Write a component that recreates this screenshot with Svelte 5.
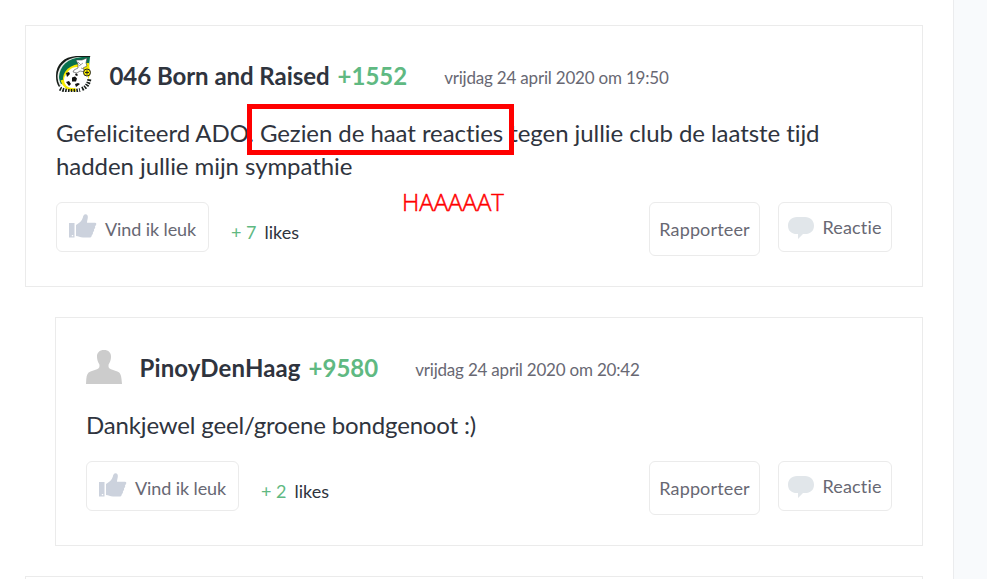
<script>
  const comments = [
    {
      name: '046 Born and Raised',
      score: '+1552',
      date: 'vrijdag 24 april 2020 om 19:50',
      club: true,
      reply: false,
      before: 'Gefeliciteerd ADO. ',
      marked: 'Gezien de haat reacties',
      after: ' tegen jullie club de laatste tijd hadden jullie mijn sympathie',
      note: 'HAAAAAT',
      likes: 7
    },
    {
      name: 'PinoyDenHaag',
      score: '+9580',
      date: 'vrijdag 24 april 2020 om 20:42',
      club: false,
      reply: true,
      before: 'Dankjewel geel/groene bondgenoot :)',
      likes: 2
    }
  ]
</script>

<div class="page">
  <main>
    {#each comments as comment}
      <article class="card" class:reply={comment.reply}>
        <header>
          {#if comment.club}
            <svg class="avatar" viewBox="0 0 36 36">
              <path d="M34.500 0H20C8 1 0 8 0 20c0 5 1 8 3 11l6-6L30 7z" fill="#161c18" />
              <path d="M34 1H22C10 2 2 10 1.500 20c0 4 1 7 2.500 10L8 28l21-15z" fill="#e8ece8" />
              <path d="M34 1H26C12 2 3.500 10 3 21c0 2 1 5 2 7l6-2L33 10z" fill="#08704e" />
              <path d="M33 7C18 7 8 12 7 22c0 4 1.500 8 3.500 10h12c7-4 11-9 11.500-15z" fill="#f5e900" />
              <circle cx="21" cy="22" r="11" fill="#fff" />
              <path d="M6 24c2 7 7 10 14 10" fill="none" stroke="#f5e900" stroke-width="3" />
              <path d="M4 32.500c4 2.500 12 3.500 20 1.500M26 33c5-2 7-6 7.500-11" fill="none" stroke="#161c18" stroke-width="4" stroke-dasharray="1.600 1.200" />
              <circle cx="16" cy="24" r="8" fill="#fff" />
              <path d="M16 21.500l3-1 2 2-1 3h-4zM10 17l3-1 1 2-3 3zM19 28l3-1 2 1-4 3zM10 26l3-1 2 3-2 2zM20 17l2 2-1 1-2-1z" fill="#111" />
              <path d="M18 14l4-2 0-4-2-4 6 0 5-2-1 5 1 3-4 2 2 4-5-1-3 2-4-1z" fill="#fff" stroke="#444" stroke-width=".6" />
              <path d="M22 6l3 3m-2 1l4-3m-2 5l3 1" fill="none" stroke="#888" stroke-width=".8" />
              <circle cx="31" cy="16.500" r="3.500" fill="#f5e900" stroke="#222" stroke-width="1" />
              <path d="M29 16.500h4m-2-2v4" stroke="#222" stroke-width="1" />
            </svg>
          {:else}
            <svg class="avatar" viewBox="0 0 36 36">
              <path d="M18 2c-4.500 0-7.200 2.700-7 7 .1 2.500.8 4.800 2.300 7.200.7 2.600-.2 4.200-2.300 5L4.500 23.500C1.500 24.700.7 27 .3 31L0 36h36l-.5-5c-.4-4-1.200-6.300-4.200-7.500L25 21.200c-2.200-.8-3-2.400-2.300-5C24.200 14 25 11.500 25 9c.2-4.300-2.500-7-7-7z" fill="#ccc" />
            </svg>
          {/if}
          <strong class="name">{comment.name}</strong>
          <strong class="score">{comment.score}</strong>
          <time>{comment.date}</time>
        </header>

        <p class="text">{comment.before}{#if comment.marked}<span class="marked">{comment.marked}</span>{comment.after}{/if}</p>
        {#if comment.note}
          <span class="note">{comment.note}</span>
        {/if}

        <footer>
          <button class="like">
            <svg width="28" height="24" viewBox="0 0 28 24">
              <path fill-rule="evenodd" d="M0 9h5.500v14.500H0zM2.800 21v1.300h1.400V21z" fill="#ccd2dd" />
              <path d="M7 11c3-1.700 6-4 6.800-7.200C14.200 1.500 15 .3 16.500.3c1.800 0 2.500 1.600 2.300 3.400-.2 1.800-.8 3.400-.8 5h8c1.300 0 1.700 1.200 1 2.200l-1 1.500.2 1.300-1.200 1.800.1 1.300-1.200 1.700v1.300l-1.200 1.600c-.2 1.400-.8 2.200-2.200 2.200H14c-3 0-4.500-1.500-7-1.600z" fill="#ccd2dd" />
            </svg>
            Vind ik leuk
          </button>
          <span class="likes"><span class="count">+ {comment.likes}</span>likes</span>
          <button class="report">Rapporteer</button>
          <button class="react">
            <svg width="26" height="22" viewBox="0 0 26 22">
              <path d="M9 0h8c5.500 0 9 3.500 9 8.700S22.500 17 17 17h-2l-5 5v-5H9C3.500 17 0 13.900 0 8.700S3.500 0 9 0z" fill="#e1e6ea" />
            </svg>
            Reactie
          </button>
        </footer>
      </article>
    {/each}
    <article class="card"></article>
  </main>
  <aside></aside>
</div>

<style>
  :global(body) {
    margin: 0;
    overflow: hidden;
  }

  .page {
    display: grid;
    grid-template-columns: 954px 1fr;
    height: 579px;
    overflow: hidden;
    font-family: Lato, sans-serif;
    font-variant-ligatures: none;
    color: #2f343e;
  }

  main {
    box-sizing: border-box;
    padding: 25px 30px 0 25px;
    background: #fff;
    border-right: 1px solid #ebecee;
  }

  aside {
    background: #f8fafc;
  }

  .card {
    position: relative;
    box-sizing: border-box;
    margin-bottom: 30px;
    padding: 30px;
    border: 1px solid #ebebeb;
  }

  .reply {
    margin-left: 30px;
  }

  header {
    display: flex;
    align-items: center;
    height: 36px;
    line-height: 36px;
    white-space: nowrap;
  }

  .avatar {
    width: 36px;
    height: 36px;
    margin-right: 17.5px;
  }

  .name,
  .score {
    padding-top: 4px;
    font-size: 24px;
    font-weight: 700;
  }

  .name {
    letter-spacing: -0.05px;
  }

  .reply .name {
    letter-spacing: 0.12px;
  }

  .score {
    margin-left: 8px;
    color: #5fb982;
  }

  time {
    margin-left: 37px;
    padding-top: 7px;
    font-size: 17px;
    letter-spacing: -0.2px;
    color: #686873;
  }

  .text {
    margin: 24px 0 20px;
    font-size: 24px;
    line-height: 33px;
    letter-spacing: -0.065px;
  }

  .reply .text {
    letter-spacing: -0.16px;
  }

  .marked {
    position: relative;
  }

  .marked::after {
    content: '';
    position: absolute;
    inset: -14px -11px -8px -13px;
    border: 5px solid #f00;
  }

  .note {
    position: absolute;
    left: 376px;
    top: 160px;
    font-family: 'Open Sans', sans-serif;
    font-size: 24px;
    font-weight: 300;
    line-height: 32px;
    color: #f00;
    -webkit-text-stroke: 0.5px #f00;
  }

  footer {
    display: flex;
    align-items: flex-start;
    height: 54px;
  }

  button {
    display: flex;
    align-items: center;
    box-sizing: border-box;
    height: 50px;
    padding: 0;
    border: 1px solid #ebebeb;
    border-radius: 6px;
    background: #fff;
    font-family: inherit;
    font-size: 18px;
    line-height: 24px;
    letter-spacing: 0.15px;
    white-space: nowrap;
    color: #686873;
  }

  .like {
    width: 153px;
    gap: 8px;
    padding: 3px 0 0 12px;
    letter-spacing: -0.1px;
  }

  .like svg {
    margin-top: -5px;
  }

  .likes {
    margin-left: 22px;
    font-size: 18px;
    line-height: 60px;
  }

  .count {
    margin-right: 8px;
    color: #5fb982;
  }

  .report {
    justify-content: center;
    width: 111px;
    height: 54px;
    margin-left: auto;
  }

  .react {
    width: 114px;
    margin-left: 18px;
    padding-left: 9px;
    gap: 8.5px;
  }

  .react svg {
    margin-top: 2px;
  }
</style>
